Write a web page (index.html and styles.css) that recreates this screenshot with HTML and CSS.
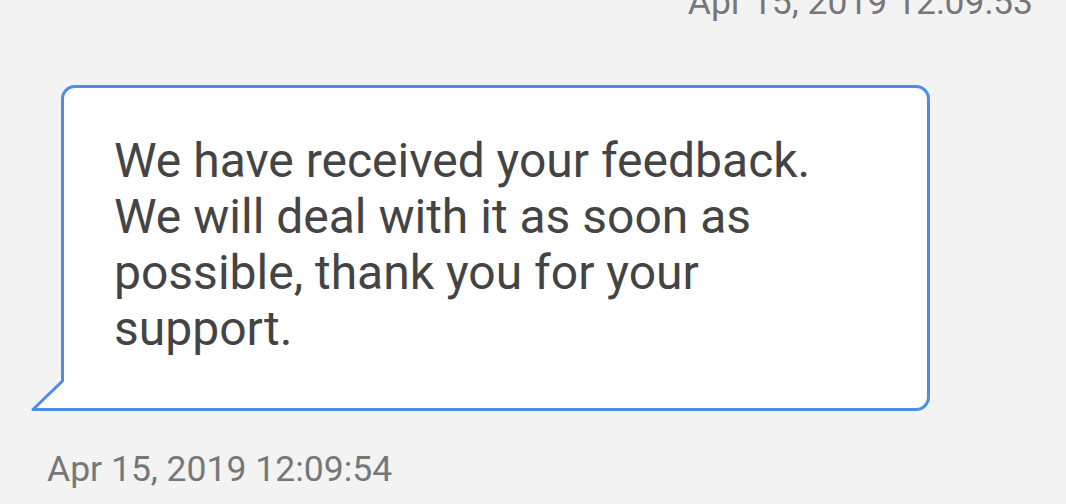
FILE: index.html
```html
<!DOCTYPE html>
<html lang="en">
<head>
    <meta charset="utf-8" />
    <title>Feedback</title>
    <link rel="stylesheet" href="styles.css">
</head>
<body>
    <div class="thread">
        <div class="time time-right">Apr 15, 2019 12:09:53</div>

        <div class="msg">
            <div class="bubble">
                <p class="bubble_text">We have received your feedback. We will deal with it as soon as possible, thank you for your support.</p>
                <!-- little tail on the lower left corner -->
                <svg class="tail" width="35" height="31" viewBox="0 0 35 31">
                    <path d="M33.5 0 L4 29.5 L35 29.5 L35 0 Z" fill="#fff" />
                    <path d="M33.5 0 L33.5 1 L4 29.5 L35 29.5" fill="none" stroke="#4f8bea" stroke-width="3" stroke-linejoin="round" />
                </svg>
            </div>
        </div>

        <div class="time">Apr 15, 2019 12:09:54</div>
    </div>
</body>
</html>
```

FILE: styles.css
```css
* {
    margin: 0px;
    padding: 0px;
    box-sizing: border-box;
}

body {
    background: #f3f3f3;
    font-family: Roboto, 'Noto Sans', sans-serif;
    overflow: hidden;
}

.thread {
    margin-top: -18px;
    display: flex;
    flex-direction: column;
}

.time {
    font-size: 35.5px;
    line-height: 40px;
    color: #777777;
    padding-left: 47px;
}

.time-right {
    text-align: right;
    padding-right: 33px;
}

.msg {
    padding: 63px 0px 38px 61px;
}

.bubble {
    position: relative;
    width: 869px;
    height: 326px;
    background: #ffffff;
    border: 3px solid #4f8bea;
    border-radius: 14px 14px 14px 0px;
    padding: 45px 100px 0px 50px;
}

.bubble_text {
    font-size: 48px;
    line-height: 56px;
    color: #444444;
}

.tail {
    position: absolute;
    left: -35px;
    bottom: -3px;
}
```
